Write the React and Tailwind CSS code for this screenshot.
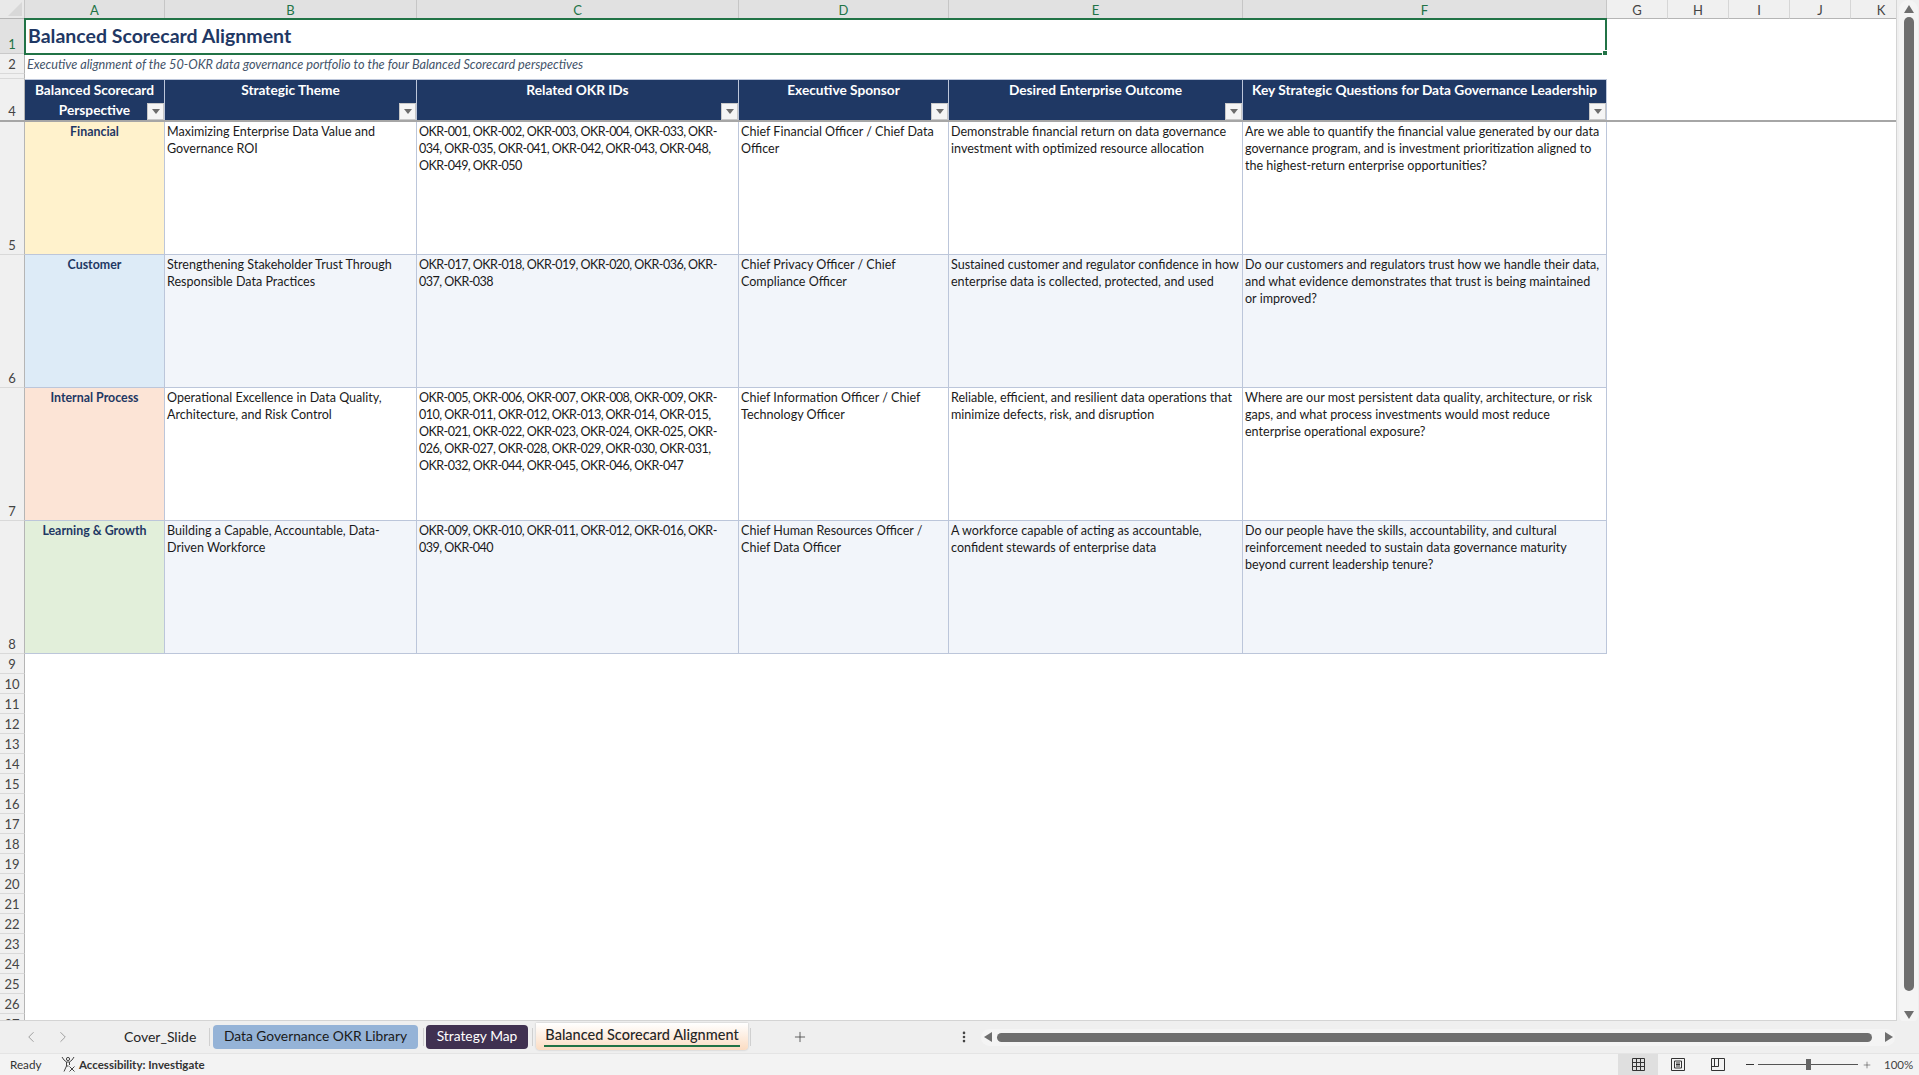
import React from "react";
import { ChevronLeft, ChevronRight, Plus, EllipsisVertical } from "lucide-react";

const FONT = "font-['Lato','Noto_Sans',sans-serif]";

const columns = [
  { label: "A", w: "w-[140px]" },
  { label: "B", w: "w-[252px]" },
  { label: "C", w: "w-[322px]" },
  { label: "D", w: "w-[210px]" },
  { label: "E", w: "w-[294px]" },
  { label: "F", w: "w-[364px]" },
];
const spare = ["G", "H", "I", "J", "K"];

const headers = [
  ["Balanced Scorecard", "Perspective"],
  ["Strategic Theme"],
  ["Related OKR IDs"],
  ["Executive Sponsor"],
  ["Desired Enterprise Outcome"],
  ["Key Strategic Questions for Data Governance Leadership"],
];

const rows = [
  {
    n: 5,
    name: "Financial",
    fill: "bg-[#fff2cc]",
    tint: "bg-white",
    cells: [
      ["Maximizing Enterprise Data Value and", "Governance ROI"],
      ["OKR-001, OKR-002, OKR-003, OKR-004, OKR-033, OKR-", "034, OKR-035, OKR-041, OKR-042, OKR-043, OKR-048,", "OKR-049, OKR-050"],
      ["Chief Financial Officer / Chief Data", "Officer"],
      ["Demonstrable financial return on data governance", "investment with optimized resource allocation"],
      ["Are we able to quantify the financial value generated by our data", "governance program, and is investment prioritization aligned to", "the highest-return enterprise opportunities?"],
    ],
  },
  {
    n: 6,
    name: "Customer",
    fill: "bg-[#ddebf7]",
    tint: "bg-[#f2f5fa]",
    cells: [
      ["Strengthening Stakeholder Trust Through", "Responsible Data Practices"],
      ["OKR-017, OKR-018, OKR-019, OKR-020, OKR-036, OKR-", "037, OKR-038"],
      ["Chief Privacy Officer / Chief", "Compliance Officer"],
      ["Sustained customer and regulator confidence in how", "enterprise data is collected, protected, and used"],
      ["Do our customers and regulators trust how we handle their data,", "and what evidence demonstrates that trust is being maintained", "or improved?"],
    ],
  },
  {
    n: 7,
    name: "Internal Process",
    fill: "bg-[#fce4d6]",
    tint: "bg-white",
    cells: [
      ["Operational Excellence in Data Quality,", "Architecture, and Risk Control"],
      ["OKR-005, OKR-006, OKR-007, OKR-008, OKR-009, OKR-", "010, OKR-011, OKR-012, OKR-013, OKR-014, OKR-015,", "OKR-021, OKR-022, OKR-023, OKR-024, OKR-025, OKR-", "026, OKR-027, OKR-028, OKR-029, OKR-030, OKR-031,", "OKR-032, OKR-044, OKR-045, OKR-046, OKR-047"],
      ["Chief Information Officer / Chief", "Technology Officer"],
      ["Reliable, efficient, and resilient data operations that", "minimize defects, risk, and disruption"],
      ["Where are our most persistent data quality, architecture, or risk", "gaps, and what process investments would most reduce", "enterprise operational exposure?"],
    ],
  },
  {
    n: 8,
    name: "Learning & Growth",
    fill: "bg-[#e2efda]",
    tint: "bg-[#f2f5fa]",
    cells: [
      ["Building a Capable, Accountable, Data-", "Driven Workforce"],
      ["OKR-009, OKR-010, OKR-011, OKR-012, OKR-016, OKR-", "039, OKR-040"],
      ["Chief Human Resources Officer /", "Chief Data Officer"],
      ["A workforce capable of acting as accountable,", "confident stewards of enterprise data"],
      ["Do our people have the skills, accountability, and cultural", "reinforcement needed to sustain data governance maturity", "beyond current leadership tenure?"],
    ],
  },
];

const emptyRows = [9, 10, 11, 12, 13, 14, 15, 16, 17, 18, 19, 20, 21, 22, 23, 24, 25, 26];

function RowNum({ n, h, selected }) {
  return (
    <div
      className={`flex w-[25px] shrink-0 items-end justify-center border-r border-b pb-px text-[13px] leading-[16px] ${h} ${
        selected
          ? "border-r-[#217346] border-b-[#c9c9c9] bg-[#e1e1e1] text-[#217346]"
          : "border-r-[#b5b5b5] border-b-[#d9d9d9] bg-[#f0f0f0] text-[#444444]"
      }`}
    >
      {n}
    </div>
  );
}

function FilterButton() {
  return (
    <span className="absolute right-0 bottom-0 flex h-[17px] w-[17px] items-center justify-center border border-[#c8c8c8] bg-[#f5f5f5]">
      <svg width="8" height="5" viewBox="0 0 8 5">
        <path d="M0 0h8L4 5z" fill="#6d6d6d" />
      </svg>
    </span>
  );
}

function Lines({ lines }) {
  return lines.map((line) => (
    <div key={line} className="whitespace-nowrap">
      {line}
    </div>
  ));
}

function ColumnHeaders() {
  return (
    <div className="flex h-[19px] shrink-0">
      <div className="relative h-full w-[25px] shrink-0 border-r border-b border-r-[#c6c6c6] border-b-[#b5b5b5] bg-[#e9e9e9]">
        <svg className="absolute right-[2px] bottom-[2px]" width="14" height="14" viewBox="0 0 14 14">
          <path d="M14 0v14H0z" fill="#d8d8d8" />
        </svg>
      </div>
      {columns.map((c) => (
        <div
          key={c.label}
          className={`flex h-full shrink-0 items-center justify-center border-r border-b border-r-[#c6c6c6] border-b-[#217346] bg-[#e1e1e1] pt-[3px] text-[13px] text-[#217346] ${c.w}`}
        >
          {c.label}
        </div>
      ))}
      {spare.map((l) => (
        <div
          key={l}
          className="flex h-full w-[61px] shrink-0 items-center justify-center border-r border-b border-r-[#d6d6d6] border-b-[#b5b5b5] bg-[#f0f0f0] pt-[3px] text-[13px] text-[#444444]"
        >
          {l}
        </div>
      ))}
    </div>
  );
}

function Sheet() {
  return (
    <div className="relative flex min-w-0 flex-1 flex-col overflow-hidden border-r border-b border-r-[#d4d4d4] border-b-[#d4d4d4] bg-white">
      <ColumnHeaders />

      <div className="flex h-[35px] shrink-0">
        <RowNum n={1} h="h-[35px]" selected />
        <div className="relative -ml-[1px] flex h-[37px] w-[1583px] -translate-y-[1px] shrink-0 items-center border-2 border-[#217346] bg-white pb-[1px] pl-[2px] text-[19.5px] leading-none font-bold text-[#1f3864]">
          Balanced Scorecard Alignment
          <span className="absolute -right-[3px] -bottom-[3px] h-[6px] w-[6px] border border-white bg-[#217346]" />
        </div>
      </div>

      <div className="flex h-[20px] shrink-0">
        <RowNum n={2} h="h-[20px]" />
        <div className="pt-[2px] pl-[2px] text-[12.7px] leading-[16px] text-[#44546a] italic">
          Executive alignment of the 50-OKR data governance portfolio to the four Balanced Scorecard perspectives
        </div>
      </div>

      <div className="flex h-[5px] shrink-0">
        <div className="h-[5px] w-[25px] shrink-0 border-r border-b border-r-[#b5b5b5] border-b-[#d9d9d9] bg-[#f0f0f0]" />
      </div>

      <div className="flex h-[43px] shrink-0 border-b-2 border-[#a6a6a6]">
        <div className="flex h-full w-[25px] shrink-0 items-end justify-center border-r border-r-[#b5b5b5] bg-[#f0f0f0] pb-px text-[13px] leading-[16px] text-[#444444]">
          4
        </div>
        {columns.map((c, i) => (
          <div
            key={c.label}
            className={`relative h-full shrink-0 border-t border-r border-[#bcc6da] bg-[#1f3864] text-center text-[13.7px] leading-[20px] font-bold text-white ${c.w}`}
          >
            <Lines lines={headers[i]} />
            <FilterButton />
          </div>
        ))}
      </div>

      {rows.map((row) => (
        <div key={row.n} className="flex h-[133px] shrink-0">
          <RowNum n={row.n} h="h-[133px]" />
          <div
            className={`h-full w-[140px] shrink-0 border-r border-b border-[#bcc6da] pt-[1px] text-center text-[12.4px] leading-[17px] font-bold text-[#1f3864] ${row.fill}`}
          >
            {row.name}
          </div>
          {row.cells.map((lines, i) => (
            <div
              key={lines[0]}
              className={`h-full shrink-0 overflow-hidden border-r border-b border-[#bcc6da] pt-[1px] pl-[2px] text-[12.55px] leading-[17px] text-[#1a1a1a] ${i === 1 ? "tracking-[-0.55px]" : ""} ${columns[i + 1].w} ${row.tint}`}
            >
              <Lines lines={lines} />
            </div>
          ))}
        </div>
      ))}

      {emptyRows.map((n) => (
        <RowNum key={n} n={n} h="h-[20px]" />
      ))}
      <RowNum n={27} h="h-[20px]" />
    </div>
  );
}

function VerticalScrollbar() {
  return (
    <div className="flex w-[22px] shrink-0 justify-end bg-[#efefef] pr-px">
      <div className="flex h-[1024px] w-[19px] shrink-0 flex-col items-center rounded-b-full rounded-t-full bg-[#f4f4f4] pt-[5px]">
        <svg width="10" height="8" viewBox="0 0 10 8" className="shrink-0">
          <path d="M5 0l5 8H0z" fill="#6e6e6e" />
        </svg>
        <div className="mt-[4px] h-[974px] w-[10px] shrink-0 rounded-b-full rounded-t-full bg-[#6e6e6e]" />
        <svg width="10" height="8" viewBox="0 0 10 8" className="mt-[20px] shrink-0">
          <path d="M0 0h10L5 8z" fill="#6e6e6e" />
        </svg>
      </div>
    </div>
  );
}

function Sep() {
  return <span className="h-[18px] w-px shrink-0 bg-[#d0d0d0]" />;
}

function TabBar() {
  return (
    <div className="flex h-[32px] shrink-0 items-center bg-[#efefef] text-[13.8px] text-[#262626]">
      <div className="flex w-[106px] shrink-0 items-center gap-[14px] pl-[22px] text-[#9a9a9a]">
        <ChevronLeft size={18} strokeWidth={1.25} />
        <ChevronRight size={18} strokeWidth={1.25} />
      </div>
      <div className="flex h-[24px] w-[103px] shrink-0 items-center pb-[1px] pl-[18px] text-[14px]">Cover_Slide</div>
      <Sep />
      <div className="mx-[3px] flex h-[24px] w-[205px] shrink-0 items-center justify-center rounded-[4px] bg-[#95b3d7] pb-[1px] text-[#1a1a1a]">
        Data Governance OKR Library
      </div>
      <span className="mr-[2px] ml-[2px] h-[18px] w-px shrink-0 bg-[#d0d0d0]" />
      <div className="flex h-[24px] w-[102px] shrink-0 items-center justify-center rounded-[4px] bg-[#403151] pb-[1px] text-white">
        Strategy Map
      </div>
      <span className="ml-[4px] h-[18px] w-px shrink-0 bg-[#d0d0d0]" />
      <div className="ml-[3px] flex h-[27px] w-[212px] shrink-0 -translate-y-[1px] flex-col items-center rounded-b-[4px] bg-gradient-to-b from-white to-[#fbdcc2] pt-[2px] shadow-[0_0_2px_rgba(0,0,0,0.25)]">
        <span className="border-b-[2px] border-[#217346] px-[1px] pb-[1px] text-[14.5px] leading-[19px] font-medium">
          Balanced Scorecard Alignment
        </span>
      </div>
      <span className="ml-[2px] h-[18px] w-px shrink-0 bg-[#d0d0d0]" />
      <Plus size={16} strokeWidth={1.25} className="ml-[41px] shrink-0 text-[#444444]" />
      <EllipsisVertical size={14} strokeWidth={2.5} className="ml-[149px] shrink-0 text-[#444444]" />
      <div className="ml-[10px] flex h-[17px] w-[914px] shrink-0 items-center rounded-full bg-[#f4f4f4] pl-[3px]">
        <svg width="8" height="10" viewBox="0 0 8 10" className="shrink-0">
          <path d="M8 0v10L0 5z" fill="#6e6e6e" />
        </svg>
        <div className="ml-[5px] h-[9px] w-[875px] shrink-0 rounded-full bg-[#6e6e6e]" />
        <svg width="8" height="10" viewBox="0 0 8 10" className="ml-[13px] shrink-0">
          <path d="M0 0l8 5-8 5z" fill="#6e6e6e" />
        </svg>
      </div>
    </div>
  );
}

function StatusBar() {
  return (
    <div className="flex h-[22px] shrink-0 items-center border-t border-[#e4e4e4] bg-[#f3f3f3] text-[12px] text-[#333333]">
      <span className="w-[60px] shrink-0 pl-[10px] text-[11.7px]">Ready</span>
      <svg width="16" height="17" viewBox="0 0 16 17" fill="none" stroke="#444444" strokeWidth="1" className="shrink-0">
        <circle cx="8" cy="3" r="1.6" />
        <path d="M2 1l2 3 2.5 2h3L12 4l2-3M6.5 6v4L4 15.5M9.5 6v3M6.5 10h2" />
        <path d="M9.5 10.5l5 5M14.5 10.5l-5 5" />
      </svg>
      <span className="ml-[3px] text-[11.5px] font-bold text-[#333333]">Accessibility: Investigate</span>
      <div className="flex-1" />
      <div className="flex h-[21px] w-[40px] shrink-0 items-center justify-center bg-[#dfdfdf]">
        <svg width="13" height="13" viewBox="0 0 13 13" fill="none" stroke="#333333">
          <path d="M.5.5h12v12H.5zM4.5.5v12M8.5.5v12M.5 4.5h12M.5 8.5h12" />
        </svg>
      </div>
      <div className="flex h-[21px] w-[40px] shrink-0 items-center justify-center">
        <svg width="14" height="13" viewBox="0 0 14 13" fill="none" stroke="#333333">
          <path d="M.5.5h13v12H.5zM3.5 3h7v7h-7zM5 5h4M5 6.5h4M5 8h4" />
        </svg>
      </div>
      <div className="flex h-[21px] w-[40px] shrink-0 items-center justify-center">
        <svg width="14" height="13" viewBox="0 0 14 13" fill="none" stroke="#333333">
          <path d="M.5.5h13v12H.5zM.5 8.5h7v-8" />
          <path d="M3.5.5v8" />
        </svg>
      </div>
      <span className="ml-[8px] h-px w-[8px] shrink-0 bg-[#333333]" />
      <div className="relative ml-[4px] flex h-[14px] w-[100px] shrink-0 items-center">
        <span className="h-px w-full bg-[#555555]" />
        <span className="absolute left-[48px] h-[11px] w-[5px] bg-[#666666]" />
      </div>
      <Plus size={10} strokeWidth={1.25} className="ml-[4px] shrink-0 text-[#333333]" />
      <span className="ml-[12px] w-[35px] shrink-0 text-[11.5px] text-[#444444]">100%</span>
    </div>
  );
}

export default function App() {
  return (
    <div className={`flex h-[1075px] w-[1919px] flex-col overflow-hidden bg-[#efefef] ${FONT}`}>
      <div className="flex h-[1021px] shrink-0 overflow-hidden">
        <Sheet />
        <VerticalScrollbar />
      </div>
      <TabBar />
      <StatusBar />
    </div>
  );
}
